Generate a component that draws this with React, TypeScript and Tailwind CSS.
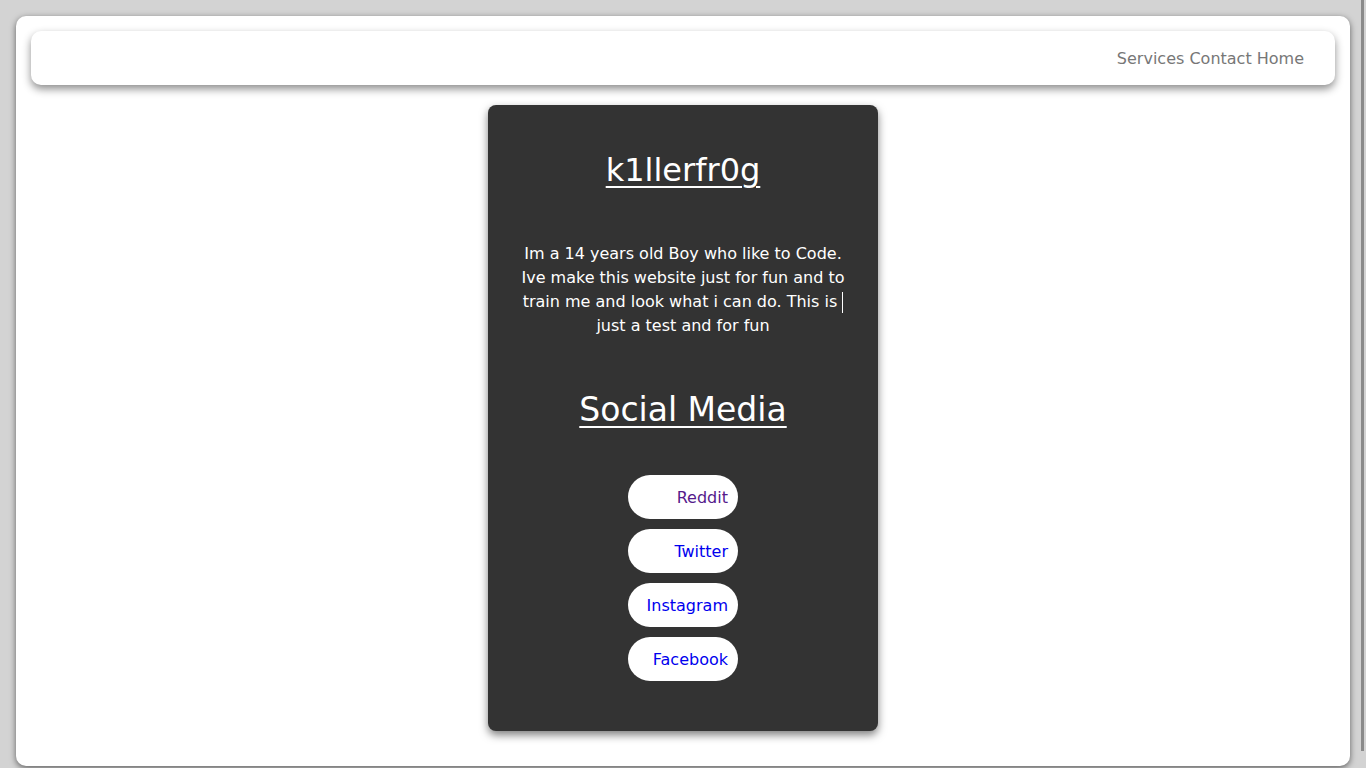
import React from "react";

const font = { fontFamily: "'DejaVu Sans', 'Open Sans', sans-serif" };

export default function App() {
  const links = [
    { name: "Reddit", color: "text-[#551a8b]" },
    { name: "Twitter", color: "text-[#0000ee]" },
    { name: "Instagram", color: "text-[#0000ee]" },
    { name: "Facebook", color: "text-[#0000ee]" },
  ];
  return (
    <div className="relative min-h-[768px] w-full overflow-hidden bg-[#d3d3d3] p-4" style={font}>
      <div className="flex h-[750px] flex-col items-center rounded-[10px] bg-white p-[15px] shadow-[0_2px_6px_rgba(0,0,0,0.55)]">
        <nav className="flex h-[54px] w-full items-center justify-end rounded-[10px] bg-white pr-[31px] pt-[2px] shadow-[0_4px_8px_rgba(0,0,0,0.45)]">
          <span className="text-[16px] text-[#777]">Services Contact Home</span>
        </nav>
        <div className="mt-5 flex h-[626px] w-[390px] flex-col items-center rounded-[8px] bg-[#333333] px-[30px] pt-[41px] text-white shadow-[0_4px_8px_rgba(0,0,0,0.5)]">
          <h1 className="text-[32px] leading-[48px] underline decoration-2 underline-offset-[5px]">k1llerfr0g</h1>
          <p className="mt-[48px] whitespace-nowrap text-center text-[16px] leading-[24px]">
            Im a 14 years old Boy who like to Code.
            <br />
            Ive make this website just for fun and to
            <br />
            train me and look what i can do. This is
            <span className="ml-[5px] inline-block h-[21px] w-px bg-white align-middle" />
            <br />
            just a test and for fun
          </p>
          <h2 className="mt-[48px] text-[33px] leading-[48px] underline decoration-2 underline-offset-[5px]">Social Media</h2>
          <div className="mt-[41px] flex flex-col gap-[10px]">
            {links.map((l) => (
              <a
                key={l.name}
                href="#"
                className={`flex h-[44px] w-[110px] items-center justify-end rounded-full bg-white pr-[10px] pt-[2px] text-[16px] ${l.color}`}
              >
                {l.name}
              </a>
            ))}
          </div>
        </div>
      </div>
      <div className="absolute right-[2px] top-0 h-[751px] w-[3px] bg-[#8a8a8a]" />
    </div>
  );
}
